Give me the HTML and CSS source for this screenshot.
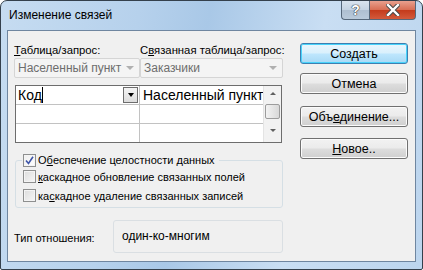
FILE: index.html
```html
<!DOCTYPE html>
<html lang="ru">
    <head>
        <meta charset="UTF-8">
        <title>Изменение связей</title>
        <link rel="stylesheet" href="styles.css">
    </head>
    <body>
        <div class="window">
            <div class="titlebar">
                <span class="title">Изменение связей</span>
                <div class="caption-buttons">
                    <span class="cap-btn help-btn">?</span>
                    <span class="cap-btn close-btn">
                        <svg width="14" height="12" viewBox="0 0 14 12">
                            <path d="M2 1 L12 11 M12 1 L2 11" stroke="#4a4a4a" stroke-width="4.4" stroke-linecap="square"/>
                            <path d="M2 1 L12 11 M12 1 L2 11" stroke="#ffffff" stroke-width="2.4" stroke-linecap="square"/>
                        </svg>
                    </span>
                </div>
            </div>
            <div class="client">
                <div class="left-pane">
                    <div class="table-row">
                        <div class="table-col first-col">
                            <label><u>Т</u>аблица/запрос:</label>
                            <div class="combo">
                                <span>Населенный пункт</span>
                                <span class="combo-arrow"></span>
                            </div>
                        </div>
                        <div class="table-col second-col">
                            <label>С<u>в</u>язанная таблица/запрос:</label>
                            <div class="combo">
                                <span>Заказчики</span>
                                <span class="combo-arrow"></span>
                            </div>
                        </div>
                    </div>

                    <div class="fields-grid">
                        <div class="grid-cells">
                            <div class="cell active-cell">
                                <span>Код<span class="caret"></span></span>
                                <span class="cell-drop"><span class="drop-arrow"></span></span>
                            </div>
                            <div class="cell second">Населенный пункт<span class="red-dot"></span></div>
                            <div class="cell"></div>
                            <div class="cell second"></div>
                            <div class="cell last"></div>
                            <div class="cell second last"></div>
                        </div>
                        <div class="scrollbar">
                            <span class="sb-arrow up"></span>
                            <span class="sb-thumb"></span>
                            <span class="sb-arrow down"></span>
                        </div>
                    </div>

                    <fieldset class="integrity-box">
                        <legend>
                            <span class="checkbox checked">
                                <svg width="9" height="9" viewBox="0 0 9 9"><path d="M1 4.5 L3.5 7.5 L8 0.8" fill="none" stroke="#3f56a8" stroke-width="1.6"/></svg>
                            </span>
                            О<u>б</u>еспечение целостности данных
                        </legend>
                        <div class="check-row"><span class="checkbox"></span><u>к</u>аскадное обновление связанных полей</div>
                        <div class="check-row"><span class="checkbox"></span>ка<u>с</u>кадное удаление связанных записей</div>
                    </fieldset>

                    <div class="relation-row">
                        <span class="relation-label">Тип отношения:</span>
                        <div class="relation-box">один-ко-многим</div>
                    </div>
                </div>

                <div class="right-pane">
                    <button class="dlg-btn default-btn">Создать</button>
                    <button class="dlg-btn">Отмена</button>
                    <button class="dlg-btn spaced">Объ<u>е</u>динение...</button>
                    <button class="dlg-btn">
                        <span><u>Н</u>овое..</span>
                    </button>
                </div>
            </div>
        </div>
    </body>
</html>
```

FILE: styles.css
```css
body {
    margin: 0;
    background: #ffffff;
    font-family: "Liberation Sans", Arial, sans-serif;
    font-size: 12px;
    color: #000000;
}
.window {
    width: 423px;
    height: 270px;
    box-sizing: border-box;
    border: 1px solid #34404c;
    border-radius: 7px 7px 2px 2px;
    background: linear-gradient(100deg, #c6dcf1 0%, #b6d1ec 30%, #a9c8e7 45%, #c9def3 70%, #bcd5ee 100%);
    display: flex;
    flex-direction: column;
    overflow: hidden;
}
.titlebar {
    height: 29px;
    display: flex;
    justify-content: space-between;
    align-items: flex-start;
    padding: 0 6px 0 8px;
}
.title {
    margin-top: 7px;
    font-size: 12px;
    color: #000000;
}
.caption-buttons {
    display: flex;
}
.cap-btn {
    height: 19px;
    display: flex;
    align-items: center;
    justify-content: center;
    border: 1px solid #55677a;
    border-top: none;
    box-sizing: border-box;
}
.help-btn {
    width: 28px;
    border-radius: 0 0 0 4px;
    border-right: none;
    background: linear-gradient(#d9e4ef 0%, #c4d3e2 50%, #aebfd1 52%, #b9cadb 100%);
    color: #ffffff;
    font-weight: bold;
    font-size: 14px;
    text-shadow: 0 0 1px #333, 0 0 1px #333, 0 0 1px #333;
}
.close-btn {
    width: 47px;
    border-radius: 0 0 4px 0;
    background: linear-gradient(#e8a08e 0%, #d86f55 48%, #c43b1c 52%, #d35a3c 100%);
}
.client {
    flex: 1;
    margin: 0 6px 7px 6px;
    border: 1px solid #6f86a0;
    background: #f0f0f0;
    display: flex;
    padding: 12px 0 0 6px;
    white-space: nowrap;
}
.left-pane {
    width: 269px;
    display: flex;
    flex-direction: column;
}
.table-row {
    display: flex;
}
.first-col {
    width: 126px;
}
.second-col {
    width: 143px;
}
.table-col label {
    display: block;
    height: 15px;
    line-height: 15px;
    font-size: 11.3px;
    color: #000000;
}
.combo {
    margin-top: 0;
    height: 20px;
    box-sizing: border-box;
    border: 1px solid #d5d5d5;
    border-radius: 2px;
    background: #f4f4f4;
    color: #6d6d6d;
    display: flex;
    justify-content: space-between;
    align-items: center;
    padding: 0 5px 0 3px;
}
.combo-arrow {
    width: 0;
    height: 0;
    border-left: 4px solid transparent;
    border-right: 4px solid transparent;
    border-top: 4px solid #b0b0b0;
}
.fields-grid {
    margin-top: 7px;
    margin-left: 1px;
    width: 267px;
    height: 58px;
    box-sizing: border-box;
    border: 1px solid #6d6d6d;
    background: #ffffff;
    display: flex;
}
.grid-cells {
    flex: 1;
    display: grid;
    grid-template-columns: 124px 1fr;
    grid-template-rows: 19px 19px 18px;
}
.cell {
    border-bottom: 1px solid #c2c2c2;
    border-right: 1px solid #c2c2c2;
    font-size: 14px;
    line-height: 18px;
    padding-left: 2px;
    display: flex;
    justify-content: space-between;
    align-items: center;
    overflow: hidden;
}
.cell.second {
    justify-content: flex-start;
    border-right: none;
    padding-left: 3px;
}
.cell.last {
    border-bottom: none;
}
.active-cell {
    padding-right: 1px;
}
.caret {
    display: inline-block;
    width: 1px;
    height: 16px;
    background: #000000;
    vertical-align: -3px;
}
.cell-drop {
    width: 15px;
    height: 16px;
    box-sizing: border-box;
    border: 1px solid #6d6d6d;
    background: linear-gradient(#f4f4f4, #dcdcdc);
    display: flex;
    align-items: center;
    justify-content: center;
}
.drop-arrow {
    width: 0;
    height: 0;
    border-left: 3.5px solid transparent;
    border-right: 3.5px solid transparent;
    border-top: 4px solid #000000;
}
.red-dot {
    width: 1px;
    height: 1px;
    background: #c0392b;
    align-self: flex-end;
    margin-bottom: 3px;
}
.scrollbar {
    width: 17px;
    border-left: 1px solid #e4e4e4;
    background: #f2f2f2;
    display: flex;
    flex-direction: column;
    align-items: center;
}
.sb-arrow {
    width: 0;
    height: 0;
    border-left: 3px solid transparent;
    border-right: 3px solid transparent;
}
.sb-arrow.up {
    margin-top: 6px;
    border-bottom: 3px solid #606060;
}
.sb-arrow.down {
    margin-top: 10px;
    border-top: 3px solid #606060;
}
.sb-thumb {
    margin-top: 9px;
    width: 15px;
    height: 15px;
    box-sizing: border-box;
    border: 1px solid #9c9c9c;
    border-radius: 2px;
    background: linear-gradient(90deg, #f3f3f3, #d8d8d8);
}
.integrity-box {
    margin: 10px 0 0 1px;
    padding: 0 0 5px 6px;
    width: 268px;
    height: 55px;
    box-sizing: border-box;
    border: 1px solid #d5dfe5;
    border-radius: 3px;
    font-size: 11px;
}
.integrity-box legend {
    padding: 0 4px 0 1px;
    margin-left: 0;
    display: flex;
    align-items: center;
    line-height: 14px;
}
.checkbox {
    width: 13px;
    height: 13px;
    box-sizing: border-box;
    border: 1px solid #8e8f8f;
    background: linear-gradient(135deg, #dcdcdc, #f6f6f6);
    box-shadow: inset 0 0 0 1px #f4f4f4;
    margin-right: 2px;
    display: inline-flex;
    align-items: center;
    justify-content: center;
    flex: none;
}
.checkbox.checked {
    background: linear-gradient(135deg, #eeeeee, #ffffff);
}
.check-row {
    display: flex;
    align-items: center;
    height: 19px;
    margin-left: 1px;
}
.relation-row {
    margin-top: 12px;
    display: flex;
    align-items: center;
}
.relation-label {
    width: 99px;
    font-size: 11px;
    padding-top: 2px;
}
.relation-box {
    width: 170px;
    height: 33px;
    box-sizing: border-box;
    border: 1px solid #dadfe3;
    border-radius: 3px;
    padding: 0 0 2px 8px;
    display: flex;
    align-items: center;
}
.right-pane {
    margin-left: 17px;
    width: 108px;
    display: flex;
    flex-direction: column;
}
.dlg-btn {
    height: 21px;
    margin-bottom: 9px;
    border: 1px solid #707070;
    border-radius: 3px;
    background: linear-gradient(#f2f2f2 0%, #ebebeb 48%, #dddddd 52%, #cfcfcf 100%);
    box-shadow: inset 0 0 0 1px #fbfbfb;
    font-family: "Liberation Sans", Arial, sans-serif;
    font-size: 12.5px;
    color: #000000;
    padding: 0;
}
.dlg-btn.spaced {
    margin-top: 3px;
    margin-bottom: 11px;
}
.default-btn {
    border-color: #3c7fb1;
    box-shadow: inset 0 0 0 1px #48d3fb;
    background: linear-gradient(#eaf6fd 0%, #d9f0fc 48%, #bee6fd 52%, #a7d9f5 100%);
}
```
